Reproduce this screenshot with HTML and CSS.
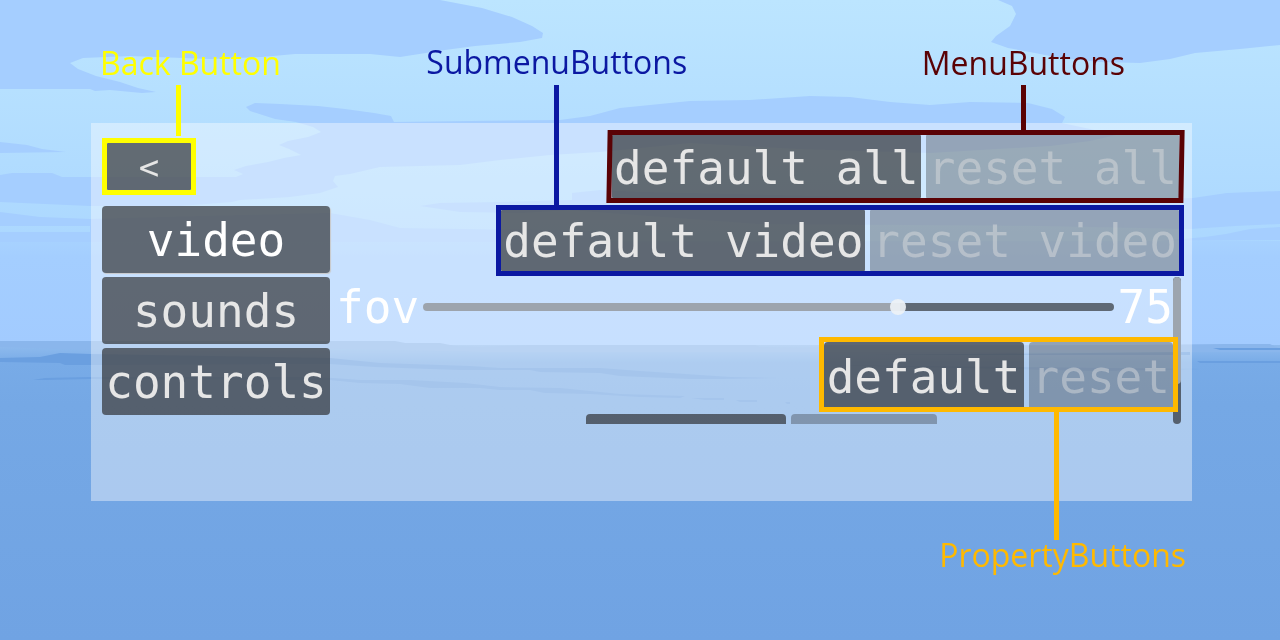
FILE: index.html
```html
<!DOCTYPE html>
<html lang="en">
<head>
<meta charset="utf-8">
<title>Settings menu</title>
<link rel="stylesheet" href="styles.css">
</head>
<body>
<svg class="backdrop" viewBox="0 0 1280 640" preserveAspectRatio="none" aria-hidden="true">
  <defs>
    <linearGradient id="sky" x1="0" y1="0" x2="0" y2="1">
      <stop offset="0" stop-color="#bce5ff"/>
      <stop offset="1" stop-color="#abd7ff"/>
    </linearGradient>
    <linearGradient id="low" x1="0" y1="0" x2="0" y2="1">
      <stop offset="0" stop-color="#a7d2ff"/>
      <stop offset="0.15" stop-color="#a4ceff"/>
      <stop offset="1" stop-color="#a2cbff"/>
    </linearGradient>
    <linearGradient id="sea" x1="0" y1="0" x2="0" y2="1">
      <stop offset="0" stop-color="#8fbbee"/>
      <stop offset="0.06" stop-color="#78abe7"/>
      <stop offset="0.2" stop-color="#75a8e5"/>
      <stop offset="1" stop-color="#70a3e3"/>
    </linearGradient>
  </defs>
  <rect width="1280" height="250" fill="url(#sky)"/>
  <rect y="241" width="1280" height="105" fill="url(#low)"/>
  <g fill="#a5ceff">
    <path d="M0 0H440L482 8 512 17 532 26 543 33 542 38 520 42 475 46 445 50 400 57 370 54 295 54 262 57 210 59 130 56 83 58 70 63 78 69 96 76 120 82 138 88 156 92 142 93 110 90 95 91 90 89H0Z"/>
    <path d="M998 0 1012 6 1016 14 1010 26 996 36 991 42 1008 48 1035 53 1060 58 1100 62 1140 63 1170 59 1195 53 1240 49 1280 45V0Z"/>
    <path d="M0 142 27 145 42 149 66 152 0 153Z"/>
    <path d="M0 175 12 173H52L62 177H236L243 174 234 170 246 166 268 162 284 158 301 155 289 149 279 145 288 141 308 137 321 132 313 127 296 122 275 119 250 111 246 107 255 103 280 104 318 106 345 109 374 113 391 116 394 122 470 121 560 120 590 116 620 108 690 101 750 100 810 96 850 97 890 102 930 105 970 102 1028 103 1052 109 1065 117 1062 123 1090 129 1116 135 1090 141 1050 146 930 153 800 149 690 143 600 152 550 155 500 160 460 165 380 167 350 174 335 176 333 181 338 187 320 193 290 197 240 200 232 202 180 206 90 206 0 202Z"/>
    <path d="M572 193 600 190 640 192 900 198 1060 202 1193 198 1227 193 1280 191V224L1235 226 1190 229 1040 226 760 224 570 210 520 213 460 212 420 206 440 203 500 202 572 200Z"/>
    <path d="M0 212 40 217 90 219 330 213 370 220 400 228 600 231 600 242H0V232H90V226H0Z"/>
    <path d="M1280 227 1250 229 1226 234 1205 237 1160 241 1280 240Z"/>
  </g>
  <rect y="345" width="1280" height="295" fill="url(#sea)"/>
  <path fill="#8ab6ec" d="M0 341H395L405 343H440L455 346 480 347 530 345H755L760 347 850 348 1226 344H1270L1280 349V352H480L300 348 90 350 0 347Z"/>
  <g fill="#6a9fe0">
    <path d="M0 358 40 357 60 353 90 354 330 358 380 363 470 366 500 368 600 368 640 371 700 375 730 377 778 378 720 379 690 379 620 376 600 373 540 372 530 370 460 370 430 369 375 367 330 364 100 365 65 365 60 363 0 362Z"/>
    <path d="M33 380 45 378 90 377 300 377 333 378 360 380 410 380 465 383 500 387 560 388 590 391 620 394 685 396 680 398 640 397 590 394 545 393 530 390 500 390 480 388 430 388 400 384 360 383 330 380 90 379 45 380Z"/>
    <path d="M691 398H724V400H705ZM736 400H757V402H740ZM785 402H790V404H787ZM1213 348H1280V350H1220ZM1197 361H1280V363H1200Z"/>
    <path d="M870 355 1190 352V355ZM820 365 1200 369 1100 371Z"/>
  </g>
</svg>

<main class="scene">
  <section class="panel" aria-label="Settings">
    <header class="topbar">
      <div class="frame frame-back">
        <button class="btn btn-back" type="button" aria-label="Back">&lt;</button>
        <span class="note note-back">Back Button</span>
      </div>
      <div class="frame frame-menu">
        <button class="btn" type="button">default all</button>
        <button class="btn" type="button" disabled>reset all</button>
        <span class="note note-menu">MenuButtons</span>
      </div>
    </header>

    <div class="body">
      <nav class="tabs" aria-label="Submenus">
        <button class="btn tab tab-active" type="button">video</button>
        <button class="btn tab" type="button">sounds</button>
        <button class="btn tab" type="button">controls</button>
      </nav>

      <div class="content">
        <div class="frame frame-submenu">
          <button class="btn" type="button">default video</button>
          <button class="btn" type="button" disabled>reset video</button>
          <span class="note note-submenu">SubmenuButtons</span>
        </div>

        <div class="scroller">
          <div class="properties">
            <div class="property">
              <label for="fov">fov</label>
              <input class="slider" id="fov" type="range" min="1" max="108" value="75">
              <output for="fov">75</output>
            </div>
            <div class="frame frame-property">
              <button class="btn" type="button">default</button>
              <button class="btn" type="button" disabled>reset</button>
              <span class="note note-property">PropertyButtons</span>
            </div>
            <div class="peek">
              <button class="btn peek-default" type="button" aria-label="default"></button>
              <button class="btn peek-reset" type="button" aria-label="reset" disabled></button>
            </div>
          </div>
          <div class="scrollbar"><div class="scroll-thumb"></div></div>
        </div>
      </div>
    </div>
  </section>
</main>
</body>
</html>
```

FILE: styles.css
```css
*, *::before, *::after { box-sizing: border-box; }

body {
  margin: 0;
  min-height: 100vh;
  background: #70a3e3;
  font-family: "DejaVu Sans Mono", monospace;
  font-size: 46px;
}

.backdrop {
  position: fixed;
  inset: 0;
  width: 100%;
  height: 100%;
}

.scene {
  position: relative;
  padding: 123px 88px 0 91px;
}

.panel {
  padding: 7px 8px 77px 11px;
  background: rgba(255, 255, 255, 0.4);
}

.topbar {
  display: flex;
  justify-content: space-between;
  align-items: center;
  margin-bottom: 2px;
}

.body { display: flex; gap: 6px; }

/* Buttons */
.btn {
  height: 66px;
  margin: 0;
  padding: 0 2px;
  border: 0;
  border-radius: 4px;
  background: rgba(38, 39, 40, 0.65);
  color: #e6e6e6;
  font: inherit;
  line-height: 1;
  white-space: nowrap;
}

.btn:disabled {
  background: rgba(38, 39, 40, 0.33);
  color: rgba(225, 225, 225, 0.45);
}

.btn-back {
  width: 100%;
  height: 47px;
  font-size: 34px;
}

.tabs {
  display: flex;
  flex-direction: column;
  gap: 4px;
  width: 228px;
  padding-top: 1px;
}

.tab { height: 67px; }

.tab-active {
  color: #fff;
  box-shadow: 1px 1px 1px #c9c9c9;
}

/* Highlight frames */
.frame {
  position: relative;
  display: flex;
  gap: 5px;
  border: 5px solid;
}

.frame .btn { border-radius: 1px; }

.frame-back {
  width: 94px;
  border-color: #ff0;
  color: #ff0;
}

.frame-menu {
  border-color: transparent;
  color: #5a0205;
}

.frame-menu::before {
  content: "";
  position: absolute;
  inset: -5px;
  border: 5px solid;
  transform: skewX(-1deg);
  pointer-events: none;
}

.frame-menu .btn {
  height: 63px;
  padding-top: 2px;
}

.frame-submenu {
  align-self: flex-end;
  border-color: #0b18a2;
  color: #0b18a2;
}

.frame-submenu .btn { height: 61px; }

.frame-property {
  z-index: 1;
  align-self: flex-end;
  margin-right: -5px;
  border-color: #ffb900;
  color: #ffb900;
}

.frame-property .btn {
  height: 65px;
  padding: 4px 3px 0;
  border-radius: 4px 4px 0 0;
}

.frame::after {
  content: "";
  position: absolute;
  width: 5px;
  background: currentColor;
}

.frame-back::after { left: 69px; top: -58px; height: 51px; }
.frame-menu::after { right: 153px; top: -50px; height: 47px; }
.frame-submenu::after { left: 53px; top: -125px; height: 122px; }
.frame-property::after { right: 114px; top: 68px; height: 130px; }

.note {
  position: absolute;
  font: 32px/40px "Open Sans", "Noto Sans", sans-serif;
  white-space: nowrap;
}

.note-back { left: -7px; top: -100px; }
.note-menu { right: 54px; top: -92px; }
.note-submenu { left: -75px; top: -168px; }
.note-property { right: -13px; top: 193px; }

/* Properties */
.content {
  display: flex;
  flex: 1;
  flex-direction: column;
  min-width: 0;
}

.scroller {
  display: flex;
  margin-right: 3px;
}

.properties {
  display: flex;
  flex: 1;
  flex-direction: column;
  min-width: 0;
}

.property {
  display: flex;
  align-items: center;
  gap: 4px;
  height: 61px;
  color: #fff;
  line-height: 1;
}

.slider {
  flex: 1;
  min-width: 0;
  height: 16px;
  margin: 0;
  appearance: none;
  background: none;
}

.slider::-webkit-slider-runnable-track {
  height: 8px;
  border-radius: 4px;
  background: linear-gradient(to right, #9da4ad 69%, #5f6975 69%);
}

.slider::-webkit-slider-thumb {
  width: 16px;
  height: 16px;
  margin-top: -4px;
  appearance: none;
  border: 0;
  border-radius: 50%;
  background: rgba(238, 242, 246, 0.92);
}

.peek {
  display: flex;
  gap: 5px;
  align-self: flex-end;
  height: 12px;
  margin-right: 236px;
  padding-top: 2px;
  overflow: hidden;
}

.peek-default { width: 200px; }
.peek-reset { width: 146px; }

.scrollbar {
  width: 8px;
  margin-top: 1px;
  border-radius: 4px;
  background: rgba(38, 39, 40, 0.65);
  overflow: hidden;
}

.scroll-thumb {
  height: 73%;
  border-radius: 4px;
  background: #9da5af;
}
```
